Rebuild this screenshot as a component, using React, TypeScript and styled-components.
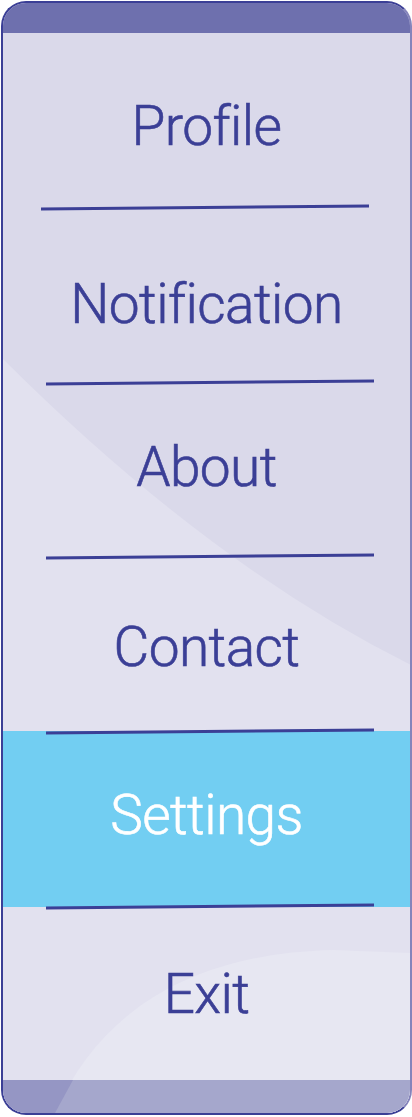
import React from "react";
import styled, { createGlobalStyle } from "styled-components";

const GlobalStyle = createGlobalStyle`
  html, body {
    margin: 0;
    padding: 0;
    background: #ffffff;
  }
  body {
    font-family: Roboto, "Noto Sans", "DejaVu Sans", sans-serif;
  }
`;

const Page = styled.div`
  padding: 1px 0 0 1px;
  width: 412px;
  height: 1117px;
  box-sizing: border-box;
`;

const Frame = styled.nav`
  position: relative;
  box-sizing: border-box;
  width: 411px;
  height: 1114px;
  border: 2px solid #3b3f96;
  border-right-color: #8584bb;
  border-radius: 25px;
  overflow: hidden;
  display: flex;
  flex-direction: column;
  background: #dad9ea;
`;

const Backdrop = styled.svg`
  position: absolute;
  inset: 0;
  width: 100%;
  height: 100%;
  z-index: 0;
`;

const Header = styled.div`
  position: relative;
  z-index: 1;
  height: 30px;
  flex: none;
  background: #6e70ae;
`;

const Menu = styled.ul`
  position: relative;
  z-index: 1;
  list-style: none;
  margin: 0;
  padding: 0;
  flex: 1;
  display: flex;
  flex-direction: column;
`;

const Item = styled.li<{ $active?: boolean; $shift?: number }>`
  flex: none;
  box-sizing: border-box;
  height: 172.83px;
  display: flex;
  align-items: center;
  justify-content: center;
  background: ${(p) => (p.$active ? "#72cef2" : "transparent")};
  box-shadow: ${(p) =>
    p.$active ? "0 -1px 0 #72cef2, 0 2px 0 #72cef2" : "none"};
  color: ${(p) => (p.$active ? "#ffffff" : "#3b3f96")};
  -webkit-text-stroke: 0.6px currentColor;
  font-size: 55px;
  font-weight: 300;
  line-height: 1;
  letter-spacing: -0.6px;
  padding-top: ${(p) => (p.$shift && p.$shift > 0 ? p.$shift * 2 : 0)}px;
  padding-bottom: ${(p) => (p.$shift && p.$shift < 0 ? -p.$shift * 2 : 0)}px;
  cursor: pointer;
`;

const Divider = styled.li<{ $left: number }>`
  flex: none;
  height: 2.5px;
  width: 328px;
  margin-left: ${(p) => p.$left}px;
  margin-bottom: -0.5px;
  background: #3b3f96;
  transform: rotate(-0.52deg);
`;

const Footer = styled.div`
  position: relative;
  z-index: 1;
  height: 33px;
  flex: none;
  background: #a5a7cc;
  &::before {
    content: "";
    position: absolute;
    inset: 0;
    background: #9596c4;
    clip-path: polygon(0 0, 70px 0, 52px 100%, 0 100%);
  }
`;

type Entry = { label: string; shift?: number; active?: boolean; left: number };

const entries: Entry[] = [
  { label: "Profile", shift: 7, left: 38 },
  { label: "Notification", shift: 10, left: 43 },
  { label: "About", shift: -2, left: 43 },
  { label: "Contact", shift: 4, left: 43 },
  { label: "Settings", shift: -3, active: true, left: 43 },
  { label: "Exit", shift: 1, left: 43 },
];

export default function App() {
  return (
    <>
      <GlobalStyle />
      <Page>
        <Frame>
          <Backdrop viewBox="0 0 407 1110" preserveAspectRatio="none" aria-hidden="true">
            <path d="M -1 355 Q 205 561 408 662 L 408 1110 L -1 1110 Z" fill="#e2e1ef" />
            <path d="M 52 1110 C 100 1000 200 950 330 947 L 408 950 L 408 1110 Z" fill="#e7e7f2" />
          </Backdrop>
          <Header />
          <Menu>
            {entries.map((e, i) => (
              <React.Fragment key={e.label}>
                <Item $active={e.active} $shift={e.shift}>
                  {e.label}
                </Item>
                {i < entries.length - 1 && <Divider $left={entries[i].left} />}
              </React.Fragment>
            ))}
          </Menu>
          <Footer />
        </Frame>
      </Page>
    </>
  );
}
